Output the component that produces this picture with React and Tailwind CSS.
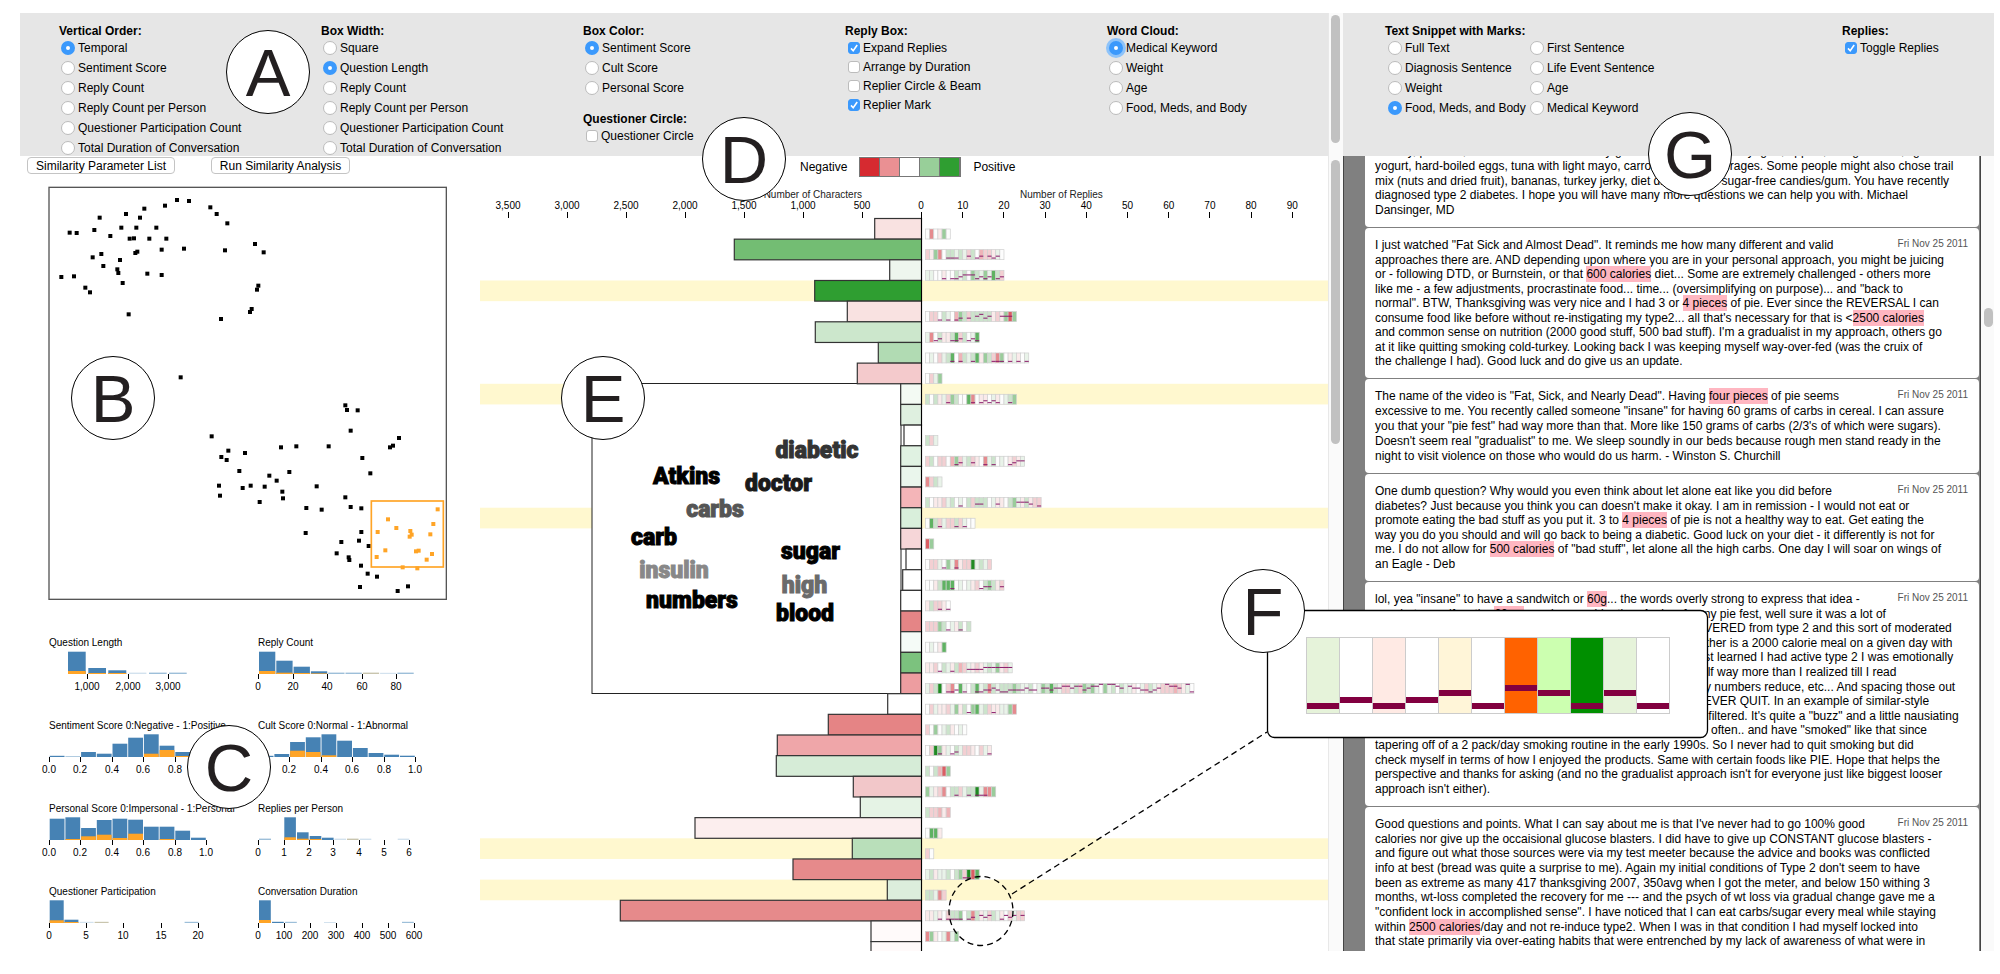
import React from "react";

const FONT = "font-['Liberation_Sans',Arial,sans-serif]";

function Radio({ name, label, checked, focused }) {
  return (
    <label className="flex h-5 items-center gap-[3px] whitespace-nowrap pl-[2px]">
      <input
        type="radio"
        name={name}
        defaultChecked={checked}
        className={
          "h-[14px] w-[14px] shrink-0 appearance-none rounded-full border border-[#bcbcbc] bg-white checked:border-[5px] checked:border-[#3b99fc] " +
          (focused ? "shadow-[0_0_0_3px_#8ec3f9]" : "")
        }
      />
      <span>{label}</span>
    </label>
  );
}

function Check({ label, checked }) {
  return (
    <label className="flex h-[19px] items-center gap-[3px] whitespace-nowrap pl-[3px]">
      <span className="grid shrink-0">
        <input
          type="checkbox"
          defaultChecked={checked}
          className="peer col-start-1 row-start-1 h-3 w-3 appearance-none rounded-[3px] border border-[#bcbcbc] bg-white checked:border-[#3b99fc] checked:bg-[#3b99fc]"
        />
        <svg viewBox="0 0 12 12" className="pointer-events-none col-start-1 row-start-1 hidden h-3 w-3 peer-checked:block">
          <path d="M3 6.4 5.2 8.8 9.2 3" fill="none" stroke="#fff" strokeWidth="1.6" />
        </svg>
      </span>
      <span>{label}</span>
    </label>
  );
}

function Group({ title, children }) {
  return (
    <fieldset className="min-w-0">
      <legend className="h-[15px] font-bold leading-4 whitespace-nowrap">{title}</legend>
      {children}
    </fieldset>
  );
}

const BLUE = "#4682b4";
const ORANGE = "#ffa426";

/* Scatter plot, three drawing units per pixel */
const DOTS = [
  [441, 90], [477, 93], [405, 107], [343, 116], [541, 112], [560, 132], [592, 160], [288, 132], [330, 143], [209, 143],
  [119, 188], [140, 189], [193, 180], [274, 173], [319, 173], [379, 173], [241, 198], [299, 206], [312, 205], [358, 206],
  [409, 206], [395, 239], [462, 236], [585, 241], [675, 222], [701, 247], [188, 262], [214, 252], [316, 249], [322, 245],
  [270, 270], [220, 288], [262, 298], [265, 309], [94, 321], [132, 319], [352, 311], [395, 315], [278, 339], [166, 353],
  [180, 367], [296, 433], [573, 447], [685, 347], [681, 359], [665, 417], [660, 426], [452, 622], [946, 706], [951, 720],
  [983, 721], [962, 782], [545, 799], [595, 842], [574, 861], [590, 870], [645, 849], [753, 832], [799, 829], [896, 829],
  [1107, 804], [1089, 827], [1080, 832], [997, 864], [1021, 910], [628, 903], [718, 917], [778, 906], [740, 932],
  [567, 947], [570, 977], [638, 954], [662, 947], [704, 950], [757, 965], [759, 985], [689, 996], [860, 949], [946, 982],
  [829, 1014], [875, 1019], [962, 1011], [994, 1015], [827, 1089], [994, 1086], [934, 1116], [987, 1112], [1016, 1128],
  [920, 1150], [956, 1162], [958, 1170], [993, 1187], [1013, 1211], [1041, 1220], [990, 1251], [1134, 1249], [1103, 1263],
];
const SELECTED = [
  [1223, 1018], [1074, 1048], [1210, 1062], [1099, 1074], [1043, 1086], [1141, 1083], [1145, 1094], [1139, 1100],
  [1201, 1093], [1066, 1141], [1158, 1144], [1166, 1142], [1206, 1152], [1040, 1161], [1190, 1169], [1118, 1192], [1162, 1195],
];

function Scatter() {
  return (
    <svg viewBox="54 48 1200 1242" width="400" height="414" className="mt-3 ml-7 shrink-0">
      <rect x="57" y="52" width="1192" height="1236" fill="#fff" stroke="#555" strokeWidth="4" />
      {DOTS.map(([x, y], i) => (
        <rect key={i} x={x - 6} y={y - 6} width="12" height="12" fill="#000" />
      ))}
      <rect x="1024" y="993" width="216" height="198" fill="none" stroke={ORANGE} strokeWidth="5" />
      {SELECTED.map(([x, y], i) => (
        <rect key={i} x={x - 6} y={y - 6} width="12" height="12" fill={ORANGE} />
      ))}
    </svg>
  );
}

/* bars: [x, width, height, highlighted height, kind] */
const even = (x0, pitch, w, rows) => rows.map(([h, o, k], i) => [x0 + i * pitch, w, h, o || 0, k]);
const tenths = [["0.0", 0], ["0.2", 31], ["0.4", 63], ["0.6", 94], ["0.8", 126], ["1.0", 157]];
const HISTOGRAMS = [
  {
    title: "Question Length",
    ticks: [["1,000", 38], ["2,000", 79], ["3,000", 119]],
    bars: [[19, 17.7, 22.3, 3], [39.3, 17.7, 6, 1], [59.3, 18, 3.7, 1], [79.7, 17.7, 1.4, 0, "f"], [100, 17.7, 1.4, 0, "l"], [120, 17.7, 1.4, 0, "l"]],
  },
  {
    title: "Reply Count",
    ticks: [["0", 0], ["20", 35], ["40", 69], ["60", 104], ["80", 138]],
    bars: even(1, 17.3, 16.3, [[22.3, 3], [13.3, 1.3], [7.3, 1], [2.7, 0.6], [1.4, 0, "l"], [1.4, 0, "l"], [1.4, 0, "t"], [1.2, 0, "f"], [1.4, 0, "l"]]),
  },
  {
    title: "Sentiment Score 0:Negative - 1:Positive",
    ticks: tenths,
    bars: even(0.7, 15.7, 14.8, [[1.2, 0], [0.8, 0, "l"], [5, 0], [3.3, 0], [13.3, 0], [19.3, 0], [22.7, 3.3], [11.3, 7], [5, 1], [2, 0]]),
  },
  {
    title: "Cult Score 0:Normal - 1:Abnormal",
    ticks: tenths,
    bars: even(0.7, 15.7, 14.8, [[1.2, 0], [3, 0], [15, 6.3], [19.7, 5], [22.7, 1.7], [16.3, 0], [9, 0], [4, 0], [2.3, 0], [1.3, 0]]),
  },
  {
    title: "Personal Score 0:Impersonal - 1:Personal",
    ticks: tenths,
    bars: even(0.7, 15.7, 14.8, [[21.3, 0], [22.7, 1], [12, 3.7], [20, 5.3], [21.3, 2], [20.3, 6.3], [13.3, 0], [13.3, 1], [9.3, 0], [2.3, 0]]),
  },
  {
    title: "Replies per Person",
    ticks: [["0", 0], ["1", 26], ["2", 51], ["3", 75], ["4", 101], ["5", 126], ["6", 151]],
    bars: [[1, 12, 1.4, 0, "l"], [26.3, 11.6, 22.7, 2.7], [39, 11.6, 7.7, 1.3], [51.7, 11.6, 4, 1], [64, 11.6, 2.3, 0], [76.5, 11.6, 1.4, 0, "f"], [89, 11.6, 1.4, 0, "t"], [101.7, 11.6, 1.4, 0, "f"], [139.7, 11.6, 1.4, 0, "f"]],
  },
  {
    title: "Questioner Participation",
    ticks: [["0", 0], ["5", 37], ["10", 74], ["15", 112], ["20", 149]],
    bars: [[0.7, 14, 22.7, 2.7], [15.4, 14, 3.3, 1], [30.6, 14, 1.2, 0, "f"], [45.6, 14, 1.2, 0, "t"], [135.6, 14, 1.2, 0, "l"]],
  },
  {
    title: "Conversation Duration",
    ticks: [["0", 0], ["100", 26], ["200", 52], ["300", 78], ["400", 104], ["500", 130], ["600", 156]],
    bars: [[1, 11.8, 22.7, 3], [14, 11.8, 1.2, 0], [27, 11.8, 1.2, 0, "l"], [66, 11.8, 1, 0, "f"], [144, 11.8, 1.2, 0, "l"]],
  },
];
const KIND = { l: "#9dbfd9", f: "#d3e2ee", t: "#c9c5ae" };

function Histogram({ title, ticks, bars }) {
  return (
    <svg width="209" height="83" viewBox="0 0 209 83" className="overflow-visible">
      <text x="0" y="13" fontSize="10" fill="#000">{title}</text>
      {bars.map(([x, w, h, o, k], i) => (
        <g key={i}>
          <rect x={x} y={41 - h} width={w} height={h} fill={k ? KIND[k] : BLUE} />
          {o > 0 && <rect x={x} y={41 - o} width={w} height={o} fill={ORANGE} />}
        </g>
      ))}
      {ticks.map(([t, x]) => (
        <g key={t}>
          <rect x={x} y="41" width="1" height="5" fill="#000" />
          <text x={x} y="57" fontSize="10" textAnchor="middle" fill="#000">{t}</text>
        </g>
      ))}
    </svg>
  );
}

/* Conversation rows: [left edge, fill, reply cells, participation marks, highlighted] */
const ROWS = [
  [874.7, "#f9e2e1", ".d.ax.", ""],
  [734.3, "#73bd73", "baxd.vvuvubv.cbbau.", "-----000--1-01-101-"],
  [889.7, "#eef6ee", "uu..a..vuv.xvuxuyvb", "----0-0012220101-01"],
  [814.7, "#2f9e31", "", "", true],
  [847.3, "#f9e2e1", ".bb.vu.cxvbvvvvvabaxex", "---0-0-01-1-2312--222-"],
  [815.3, "#cce7cc", "ud.vaavybv.uy", "--01--001-010"],
  [878.3, "#b1dbb3", ".u.buvy.cvuvyaxvbdx.aua.u", "------0-0--0----000-0-0-0"],
  [857.3, "#f4cacc", ".bux", ""],
  [900.7, "#f3faf3", "v.vaubxv..yd.aa.ua.uvx", "-----0-----0-01010--0-", true],
  [900.7, "#dff0e0", "", ""],
  [904, "#fff", "vbu", ""],
  [900.7, "#e0f2e2", "bv.bb.cxbuvba.duv.u.abau", "-------01--1--0-0---0122"],
  [900.7, "#eaf6ec", "dbvu", ""],
  [900.7, "#f4b5b8", "v.aabuv.u.vbvvv.uaa.vxuavabb", "--------0---11---1----2221-0"],
  [900.7, "#d9efdb", ".yvbubbvbu..", "---0---0-0--", true],
  [900.7, "#f6d6d8", "ex", ""],
  [906, "#fff", ".bbu.xudabbzuvub", "----0--0--------"],
  [902.7, "#fff", "..avyyy.u.uab.vxvab", "------0------011--1"],
  [900.7, "#fff", "avbba.", "---0-0"],
  [900.7, "#e58586", "bbbxv.uav.v", "-----0--0--"],
  [900.7, "#f5fbf7", ".u.ay", ""],
  [900.7, "#7cc27e", "aab.vuavcbuabauvuxabu", "---0--0---11112222222"],
  [900.7, "#ed9da0", "ubvz.bd.yu.vyuvdvuvvvxvuuv.uxvyvubbuvbxvxu.xuv.vuua.ubvuabbbcbau.", "-----001-0--001121001111211-221223323312334-4432-32211012-4332-40"],
  [887.7, "#fff", ".buaabuxav.xyuvbaauuxd", "----------0-----0-----"],
  [828.3, "#e58485", "b.x.uva.u.", ""],
  [777.3, "#efa6a9", ".bzxau.vubba.bua", "---0--01-------0"],
  [776.3, "#d6ecd7", "v.vcex", ""],
  [853.3, "#f2c7c9", "xuabd.vvbuvvzuddx", "-------0--0-000--"],
  [860.3, "#e5f3e5", "vbbcac", ""],
  [695, "#fceeee", ".yya", ""],
  [852.3, "#b9dfba", "b.", "", true],
  [793, "#e68a8b", "uvauuv.vxbzey", "---------00--"],
  [887.3, "#dceedc", "vvudb", "", true],
  [620.3, "#e68a8b", "aaua.bvvx.vdvaubvua.bubb", "---0-0000-01-212--0212-2"],
  [871, "#fffafa", "dxa.udux", ""],
  [871, "#fffafa", "", ""],
];
const CELL = {
  ".": "#fdfdfd", a: "#faeaea", b: "#f3cfd2", c: "#efb3b7", d: "#e58a8e", e: "#db5d63",
  u: "#e9f3e9", v: "#cbe4cb", x: "#9acc9b", y: "#5fb262", z: "#1f8a22",
};
const WORDS = [
  ["diabetic", 775, 458, "#333333", 84], ["Atkins", 655, 484, "#000000", 63], ["doctor", 745, 491, "#1a1a1a", 67],
  ["carbs", 686, 517, "#555555", 58], ["carb", 631, 545, "#000000", 46], ["sugar", 781, 559, "#000000", 59],
  ["insulin", 638, 578, "#888888", 72], ["high", 782, 593, "#6b6b6b", 45], ["numbers", 647, 608, "#000000", 90],
  ["blood", 777, 621, "#000000", 56],
];
const PITCH = 20.66;

function ConversationChart() {
  const rowY = (i) => 218.5 + i * PITCH;
  return (
    <svg width="848" height="773" viewBox="480 178 848 773" className="block shrink-0">
      <text x="862" y="198" fontSize="10" textAnchor="end" fill="#222">Number of Characters</text>
      <text x="1020" y="198" fontSize="10" fill="#222">Number of Replies</text>
      {["0", "500", "1,000", "1,500", "2,000", "2,500", "3,000", "3,500"].map((t, i) => (
        <g key={t}>
          <text x={921 - i * 59} y="209" fontSize="10" textAnchor="middle">{t}</text>
          <rect x={921 - i * 59} y="212" width="1" height="6" />
        </g>
      ))}
      {[1, 2, 3, 4, 5, 6, 7, 8, 9].map((n) => (
        <g key={n}>
          <text x={921.5 + n * 41.2} y="209" fontSize="10" textAnchor="middle">{n * 10}</text>
          <rect x={Math.round(921 + n * 41.2)} y="212" width="1" height="6" />
        </g>
      ))}
      {ROWS.map(([, , , , hot], i) => hot && <rect key={i} x="480" y={rowY(i)} width="848" height={PITCH} fill="#fff8cf" />)}
      <rect x="592" y="383.5" width="309" height="310" fill="#fff" stroke="#222" />
      {ROWS.map(([x, fill, cells, marks], i) => (
        <g key={i}>
          <rect x={x} y={rowY(i)} width={921.5 - x} height={PITCH} fill={fill} stroke="#333" strokeWidth="1.2" />
          {[...cells].map((c, j) => (
            <rect key={j} x={925.5 + j * 4.13} y={rowY(i) + 10.5} width="4.13" height="10" fill={CELL[c]} stroke="#cfcfcf" strokeWidth="0.7" />
          ))}
          {[...marks].map((m, j) =>
            m === "-" ? null : (
              <rect key={j} x={925.5 + j * 4.13} y={rowY(i) + 18.4 - Number(m) * 1.9} width="4.13" height="1" fill="#8a1a6a" />
            ),
          )}
        </g>
      ))}
      <rect x="921" y="212" width="1" height="739" fill="#000" />
      {WORDS.map(([w, x, y, fill, width]) => (
        <text key={w} x={x + width / 2} y={y} fill={fill} stroke={fill} strokeWidth="1" textAnchor="middle" className="font-[Impact,Roboto,sans-serif] text-[23px] font-black">
          {w}
        </text>
      ))}
    </svg>
  );
}

function Mark({ children }) {
  return <mark className="bg-[#ffb6c1] py-px text-inherit">{children}</mark>;
}

/* Text held back by the callout that lies over the fifth reply */
const Gap = () => <span className="inline-block w-80" />;

const CARDS = [
  {
    size: "-mt-[22px] min-h-[93px]",
    lines: [
      "healthy, portable, low-carb snacks and many good options, like Greek yogurt, apples, string cheese, light",
      "yogurt, hard-boiled eggs, tuna with light mayo, carrots, or diet beverages. Some people might also chose trail",
      "mix (nuts and dried fruit), bananas, turkey jerky, diet drinks, or all sugar-free candies/gum. You have recently",
      "diagnosed type 2 diabetes. I hope you will have many more questions we can help you with. Michael",
      "Dansinger, MD",
    ],
  },
  {
    size: "min-h-[150px]",
    date: true,
    lines: [
      "I just watched \"Fat Sick and Almost Dead\". It reminds me how many different and valid",
      "approaches there are. AND depending upon where you are in your personal approach, you might be juicing",
      <>or - following DTD, or Burnstein, or that <Mark>600 calories</Mark> diet... Some are extremely challenged - others more</>,
      "like me - a few adjustments, procrastinate food... time... (oversimplifying on purpose)... and \"back to",
      <>normal". BTW, Thanksgiving was very nice and I had 3 or <Mark>4 pieces</Mark> of pie. Ever since the REVERSAL I can</>,
      <>consume food like before without re-instigating my type2... all that's necessary for that is &lt;<Mark>2500 calories</Mark></>,
      "and common sense on nutrition (2000 good stuff, 500 bad stuff). I'm a gradualist in my approach, others go",
      "at it like quitting smoking cold-turkey. Looking back I was keeping myself way-over-fed (was the cruix of",
      "the challenge I had). Good luck and do give us an update.",
    ],
  },
  {
    size: "min-h-[94px]",
    date: true,
    lines: [
      <>The name of the video is "Fat, Sick, and Nearly Dead". Having <Mark>four pieces</Mark> of pie seems</>,
      "excessive to me. You recently called someone \"insane\" for having 60 grams of carbs in cereal. I can assure",
      "you that your \"pie fest\" had way more than that. More like 150 grams of carbs (2/3's of which were sugars).",
      "Doesn't seem real \"gradualist\" to me. We sleep soundly in our beds because rough men stand ready in the",
      "night to visit violence on those who would do us harm. - Winston S. Churchill",
    ],
  },
  {
    size: "min-h-[107px]",
    date: true,
    lines: [
      "One dumb question? Why would you even think about let alone eat like you did before",
      "diabetes? Just because you think you can doesn't make it okay. I am in remission - I would not eat or",
      <>promote eating the bad stuff as you put it. 3 to <Mark>4 pieces</Mark> of pie is not a healthy way to eat. Get eating the</>,
      "way you do you should and will go back to being a diabetic. Good luck on your diet - it differently is not for",
      <>me. I do not allow for <Mark>500 calories</Mark> of "bad stuff", let alone all the high carbs. One day I will soar on wings of</>,
      "an Eagle - Deb",
    ],
  },
  {
    size: "min-h-[224px]",
    date: true,
    lines: [
      <>lol, yea "insane" to have a sandwitch or <Mark>60g</Mark>... the words overly strong to express that idea -</>,
      <>on what myself as the <Mark>60mg</Mark> number combination. And as for my pie fest, well sure it was a lot of</>,
      <><Gap />OVERED from type 2 and this sort of moderated</>,
      <><Gap />rather is a 2000 calorie meal on a given day with</>,
      <><Gap />just learned I had active type 2 I was emotionally</>,
      <><Gap />self way more than I realized till I read</>,
      <><Gap />my numbers reduce, etc... And spacing those out</>,
      <><Gap />NEVER QUIT. In an example of similar-style</>,
      <><Gap />unfiltered. It's quite a "buzz" and a little nausiating</>,
      <><Gap />so often.. and have "smoked" like that since</>,
      "tapering off of a 2 pack/day smoking routine in the early 1990s. So I never had to quit smoking but did",
      "check myself in terms of how I enjoyed the products. Same with certain foods like PIE. Hope that helps the",
      "perspective and thanks for asking (and no the gradualist approach isn't for everyone just like biggest looser",
      "approach isn't either).",
    ],
  },
  {
    size: "min-h-[166px]",
    date: true,
    lines: [
      "Good questions and points. What I can say about me is that I've never had to go 100% good",
      "calories nor give up the occaisional glucose blasters. I did have to give up CONSTANT glucose blasters -",
      "and figure out what those sources were via my test meeter because the advice and books was conflicted",
      "info at best (bread was quite a surprise to me). Again my initial conditions of Type 2 don't seem to have",
      "been as extreme as many 417 thanksgiving 2007, 350avg when I got the meter, and below 150 withing 3",
      "months, wt-loss completed the recovery for me --- and the psych of wt loss via gradual change gave me a",
      "\"confident lock in accomplished sense\". I have noticed that I can eat carbs/sugar every meal while staying",
      <>within <Mark>2500 calories</Mark>/day and not re-induce type2. When I was in that condition I had myself locked into</>,
      "that state primarily via over-eating habits that were entrenched by my lack of awareness of what were in",
      "the foods being, or what choices make up such important nutrients, and that for the in, required had",
    ],
  },
];

function Card({ size, date, lines }) {
  return (
    <article className={"mb-px flex shrink-0 flex-col justify-between rounded-[4px] bg-white pt-[10px] pr-[11px] pb-[10px] pl-[10px] " + size}>
      {lines.map((line, i) => (
        <p key={i} className="flex h-[14px] justify-between leading-[14px] whitespace-nowrap">
          <span>{line}</span>
          {date && i === 0 && <time className="text-[10px] leading-3 text-[#555]">Fri Nov 25 2011</time>}
        </p>
      ))}
    </article>
  );
}

const MARKER =
  "absolute flex h-[84px] w-[84px] items-center justify-center rounded-full border border-black bg-white text-[67px] leading-none text-[#231f20]";

const CALLOUT = [
  ["#e6f3da", 703], ["#ffffff", 697], ["#ffeae4", 703], ["#ffffff", 697], ["#fff5d8", 690], ["#ffffff", 703],
  ["#ff6200", 685], ["#ccffb0", 690], ["#008f00", 703], ["#e6f3da", 690], ["#ffffff", 703],
];

export default function App() {
  return (
    <main className={"relative flex h-screen overflow-hidden bg-white pt-[13px] pr-[6px] pb-[23px] pl-5 text-[12px] text-black " + FONT}>
      <section className="flex min-w-0 flex-[1323] flex-col">
        <header className="flex h-[143px] shrink-0 overflow-hidden">
          <form className="flex min-w-0 flex-1 overflow-hidden bg-[#e6e6e6] pt-[10px] pl-[39px] *:w-[262px] *:shrink-0">
            <Group title="Vertical Order:">
              <Radio name="order" label="Temporal" checked />
              <Radio name="order" label="Sentiment Score" />
              <Radio name="order" label="Reply Count" />
              <Radio name="order" label="Reply Count per Person" />
              <Radio name="order" label="Questioner Participation Count" />
              <Radio name="order" label="Total Duration of Conversation" />
            </Group>
            <Group title="Box Width:">
              <Radio name="width" label="Square" />
              <Radio name="width" label="Question Length" checked />
              <Radio name="width" label="Reply Count" />
              <Radio name="width" label="Reply Count per Person" />
              <Radio name="width" label="Questioner Participation Count" />
              <Radio name="width" label="Total Duration of Conversation" />
            </Group>
            <div>
              <Group title="Box Color:">
                <Radio name="color" label="Sentiment Score" checked />
                <Radio name="color" label="Cult Score" />
                <Radio name="color" label="Personal Score" />
              </Group>
              <div className="mt-[13px]">
                <Group title="Questioner Circle:">
                  <Check label="Questioner Circle" />
                </Group>
              </div>
            </div>
            <Group title="Reply Box:">
              <Check label="Expand Replies" checked />
              <Check label="Arrange by Duration" />
              <Check label="Replier Circle & Beam" />
              <Check label="Replier Mark" checked />
            </Group>
            <Group title="Word Cloud:">
              <Radio name="cloud" label="Medical Keyword" checked focused />
              <Radio name="cloud" label="Weight" />
              <Radio name="cloud" label="Age" />
              <Radio name="cloud" label="Food, Meds, and Body" />
            </Group>
          </form>
          <div className="w-[15px] shrink-0 border-l border-[#e8e8e8] bg-[#fafafa] pt-[2px] pl-[2px]">
            <div className="h-32 w-[9px] rounded-full bg-[#c1c1c1]" />
          </div>
        </header>

        <div className="flex min-h-0 flex-1 overflow-hidden">
          <aside className="flex w-[460px] shrink-0 flex-col">
            <div className="flex gap-9 pt-px pl-[7px]">
              <button className="h-[17px] w-[148px] rounded-[4px] border border-[#c4c4c4] bg-white leading-none whitespace-nowrap">Similarity Parameter List</button>
              <button className="h-[17px] w-[139px] rounded-[4px] border border-[#c4c4c4] bg-white leading-none whitespace-nowrap">Run Similarity Analysis</button>
            </div>
            <Scatter />
            <div className="mt-[33px] ml-[29px] grid grid-cols-[209px_209px]">
              {HISTOGRAMS.map((h) => (
                <Histogram key={h.title} {...h} />
              ))}
            </div>
          </aside>
          <div className="flex min-w-0 flex-1 flex-col overflow-hidden">
            <div className="flex h-[22px] shrink-0 items-center gap-3 pl-[320px]">
              <span>Negative</span>
              <div className="flex h-5 border border-[#777] *:w-5 *:border-r *:border-[#777]">
                <i className="bg-[#d62a30]" />
                <i className="bg-[#ea9093]" />
                <i className="bg-white" />
                <i className="bg-[#98cf99]" />
                <i className="border-r-0 bg-[#2f9e31]" />
              </div>
              <span>Positive</span>
            </div>
            <ConversationChart />
          </div>
          <div className="w-[15px] shrink-0 border-l border-[#e8e8e8] bg-[#fafafa] pt-1 pl-[2px]">
            <div className="h-[284px] w-[9px] rounded-full bg-[#c1c1c1]" />
          </div>
        </div>
      </section>

      <section className="flex min-w-0 flex-[651] flex-col">
        <form className="flex h-[143px] shrink-0 bg-[#e6e6e6] pt-[10px] pl-[42px]">
          <div className="w-[457px]">
            <Group title="Text Snippet with Marks:">
              <div className="grid grid-cols-[142px_1fr] pl-px">
                <Radio name="snippet" label="Full Text" />
                <Radio name="snippet" label="First Sentence" />
                <Radio name="snippet" label="Diagnosis Sentence" />
                <Radio name="snippet" label="Life Event Sentence" />
                <Radio name="snippet" label="Weight" />
                <Radio name="snippet" label="Age" />
                <Radio name="snippet" label="Food, Meds, and Body" checked />
                <Radio name="snippet" label="Medical Keyword" />
              </div>
            </Group>
          </div>
          <Group title="Replies:">
            <Check label="Toggle Replies" checked />
          </Group>
        </form>
        <div className="flex min-h-0 flex-1">
          <div className="flex min-w-0 flex-1 flex-col overflow-hidden border-x border-[#444] bg-[#808080] pr-px pl-[21px]">
            {CARDS.map((c, i) => (
              <Card key={i} {...c} />
            ))}
          </div>
          <div className="w-[13px] shrink-0 bg-[#fafafa] pt-[152px] pl-[3px]">
            <div className="h-[19px] w-[9px] rounded-full bg-[#c1c1c1]" />
          </div>
        </div>
      </section>

      <svg width="2000" height="974" viewBox="0 0 2000 974" className="pointer-events-none absolute top-0 left-0">
        <g fill="none" stroke="#000" strokeWidth="1.3" strokeDasharray="6 4">
          <ellipse cx="981" cy="911" rx="32" ry="34.5" />
          <path d="M1012 894 1267 732" />
        </g>
        <rect x="1267.5" y="610.5" width="440" height="127" rx="7" fill="#fff" stroke="#000" strokeWidth="1.3" />
        {CALLOUT.map(([fill, y], i) => (
          <g key={i}>
            <rect x={1306.5 + i * 33} y="637.5" width="33" height="76" fill={fill} stroke="#ccc" />
            <rect x={1307 + i * 33} y={y} width="32" height="6" fill="#820040" />
          </g>
        ))}
      </svg>
      <div className={MARKER + " top-[30px] left-[226px]"}>A</div>
      <div className={MARKER + " top-[356px] left-[71px]"}>B</div>
      <div className={MARKER + " top-[725px] left-[187px]"}>C</div>
      <div className={MARKER + " top-[117px] left-[702px]"}>D</div>
      <div className={MARKER + " top-[356px] left-[561px]"}>E</div>
      <div className={MARKER + " top-[569px] left-[1221px]"}>F</div>
      <div className={MARKER + " top-[112px] left-[1648px]"}>G</div>
    </main>
  );
}
